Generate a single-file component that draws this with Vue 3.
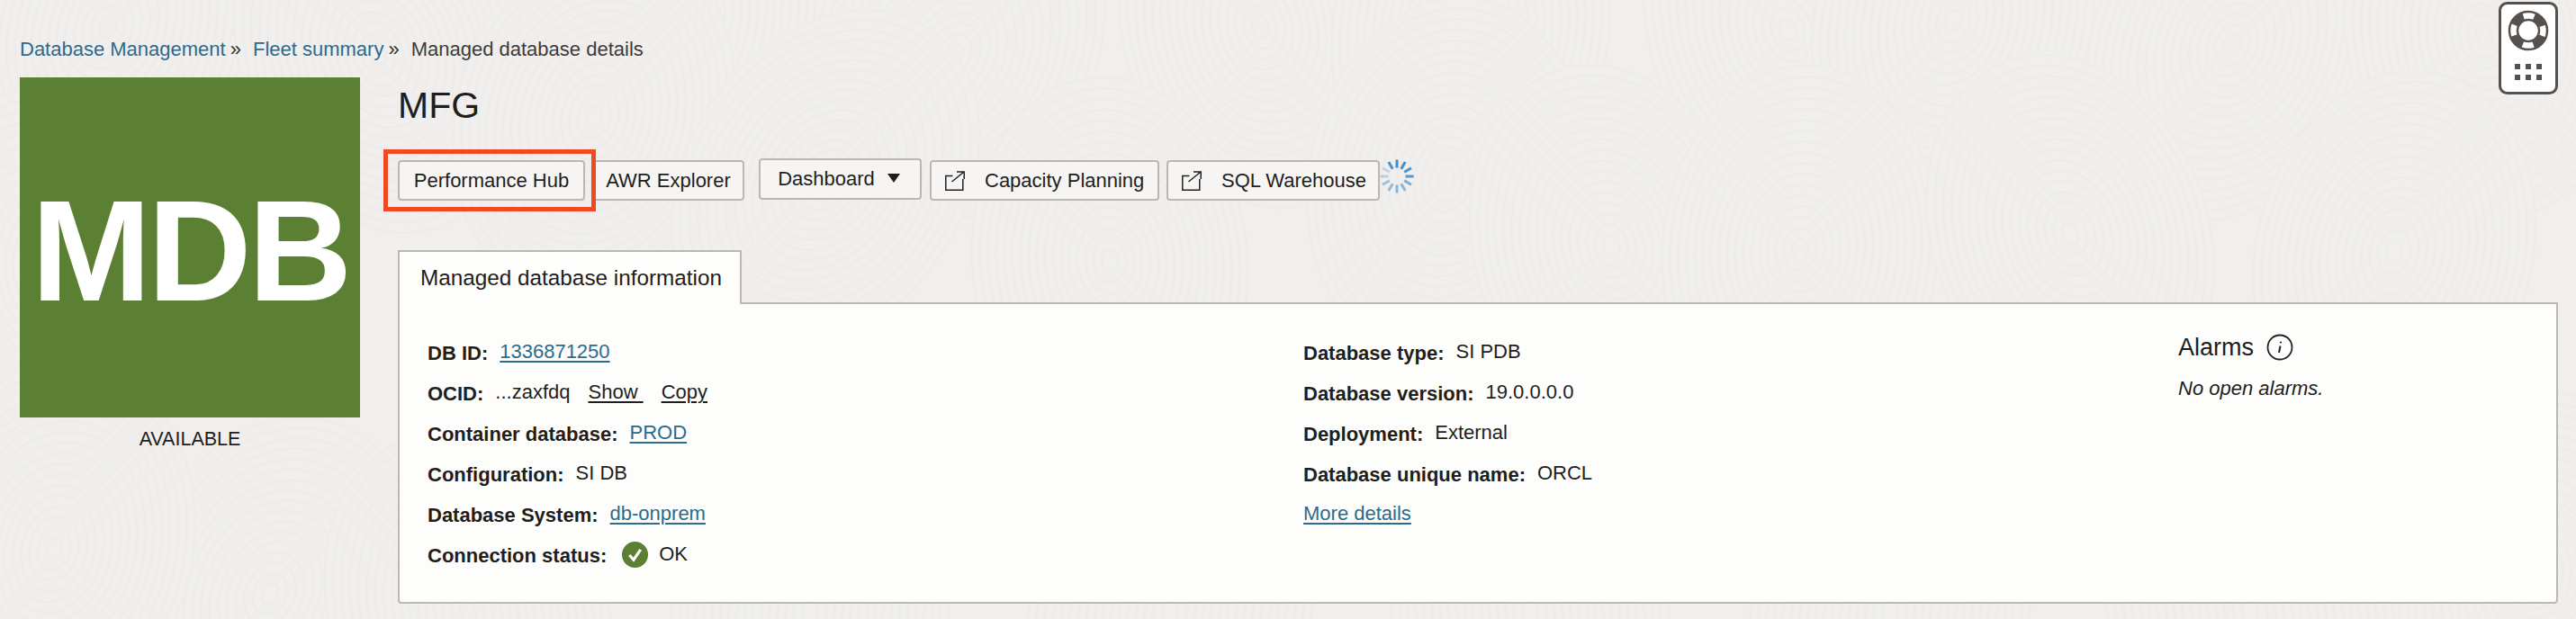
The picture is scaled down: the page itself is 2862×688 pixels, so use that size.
<script setup>
const leftRows = [
  { label: 'DB ID:', value: '1336871250', link: true },
  { label: 'OCID:', value: '...zaxfdq', actions: ['Show\u00a0', 'Copy'] },
  { label: 'Container database:', value: 'PROD', link: true },
  { label: 'Configuration:', value: 'SI DB' },
  { label: 'Database System:', value: 'db-onprem', link: true },
  { label: 'Connection status:', value: 'OK', ok: true },
]
const midRows = [
  { label: 'Database type:', value: 'SI PDB' },
  { label: 'Database version:', value: '19.0.0.0.0' },
  { label: 'Deployment:', value: 'External' },
  { label: 'Database unique name:', value: 'ORCL' },
]
const spokes = [0.95, 0.95, 0.9, 0.85, 0.65, 0.55, 0.55, 0.5, 0.45, 0.3, 0.25, 0.9].map((opacity, i) => ({
  angle: i * 30,
  opacity,
}))
// x, y, rotation of each fingerprint-like swirl in the background; later ones lie over earlier ones
const swirls = [
  [120, 30, 20], [420, 60, -20], [760, 20, 10], [1060, 60, 30], [1400, 30, -15],
  [1634, 33, 10], [1986, 33, -20], [2170, 23, 15], [2480, 50, 25], [2760, 40, -10],
  [60, 300, -10], [300, 660, 25], [660, 130, 15], [917, 200, 35], [1233, 290, -5],
  [1607, 200, 10], [1790, 273, -15], [2000, 277, 5], [2300, 260, -20], [2660, 280, 15],
  [60, 610, 15], [520, 680, -20], [900, 680, 10], [1300, 680, 20], [1700, 680, -10],
  [2100, 680, 15], [2500, 680, -25], [2820, 640, 10],
]
const rings = Array.from({ length: 17 }, (_, i) => 17 - i)
</script>

<template>
  <div class="page">
    <svg class="texture" width="2862" height="688" aria-hidden="true">
      <g v-for="(s, i) in swirls" :key="i" :transform="`translate(${s[0]} ${s[1]}) rotate(${s[2]})`"
        stroke="#edecea" stroke-width="2.5" fill="none">
        <ellipse v-for="n in rings" :key="n" cx="0" cy="0" :rx="n * 9" :ry="n * 12"
          :fill="n === 17 ? '#f0efed' : 'none'" />
      </g>
    </svg>

    <nav class="crumbs">
      <a>Database Management</a><span class="sep">»</span>
      <a>Fleet summary</a><span class="sep">»</span>
      <span class="current">Managed database details</span>
    </nav>

    <div class="main">
      <aside class="side">
        <div class="tile">MDB</div>
        <div class="state">AVAILABLE</div>
      </aside>

      <section class="content">
        <h1>MFG</h1>
        <div class="actions">
          <button class="btn first">Performance Hub</button>
          <button class="btn awr">AWR Explorer</button>
          <button class="btn dash">Dashboard <span class="caret"></span></button>
          <button class="btn ext cap">
            <svg width="22" height="22" viewBox="0 0 22 22" fill="none" stroke="#222" stroke-width="1.5">
              <path d="M8.5 5.5H.8v15.7h19V9" />
              <path d="M7.5 12 21 1M13 .9h8.2V9" />
            </svg>
            Capacity Planning
          </button>
          <button class="btn ext sql">
            <svg width="22" height="22" viewBox="0 0 22 22" fill="none" stroke="#222" stroke-width="1.5">
              <path d="M8.5 5.5H.8v15.7h19V9" />
              <path d="M7.5 12 21 1M13 .9h8.2V9" />
            </svg>
            SQL Warehouse
          </button>
          <svg class="spinner" width="40" height="40" viewBox="-20 -20 40 40">
            <line v-for="s in spokes" :key="s.angle" x1="0" y1="-9.5" x2="0" y2="-18.5"
              stroke="#3a87cb" stroke-width="3" :stroke-opacity="s.opacity"
              :transform="`rotate(${s.angle})`" />
          </svg>
        </div>

        <div class="tabs"><div class="tab">Managed database information</div></div>

        <div class="panel">
          <div class="col col-left">
            <div v-for="r in leftRows" :key="r.label" class="row">
              <b>{{ r.label }}</b>
              <svg v-if="r.ok" class="ok" width="29" height="29" viewBox="0 0 28 28">
                <circle cx="14" cy="14" r="14" fill="#5c8033" />
                <path d="M8 14.5l4.5 5 7.5-11" fill="none" stroke="#fff" stroke-width="3" />
              </svg>
              <a v-if="r.link" class="link">{{ r.value }}</a>
              <span v-else>{{ r.value }}</span>
              <a v-for="x in r.actions" :key="x" class="act">{{ x }}</a>
            </div>
          </div>
          <div class="col col-mid">
            <div v-for="r in midRows" :key="r.label" class="row">
              <b>{{ r.label }}</b><span>{{ r.value }}</span>
            </div>
            <div class="row"><a class="link">More details</a></div>
          </div>
          <div class="col col-alarms">
            <div class="alarm-head">
              <span>Alarms</span>
              <svg width="30" height="30" viewBox="0 0 30 30" fill="none" stroke="#222" stroke-width="1.8">
                <circle cx="15" cy="15" r="13.5" />
                <path d="M15.5 13.5l-1.5 7.5" stroke-width="2" />
                <circle cx="16" cy="9.5" r="1.1" fill="#222" stroke="none" />
              </svg>
            </div>
            <em>No open alarms.</em>
          </div>
        </div>
      </section>
    </div>

    <div class="help">
      <svg width="66" height="103" viewBox="0 0 66 103">
        <rect x="1.5" y="1.5" width="63" height="100" rx="8" fill="#fff" stroke="#55514e" stroke-width="3" />
        <circle cx="33" cy="32" r="21" fill="none" stroke="#55514e" stroke-width="2.5" />
        <circle cx="33" cy="32" r="12" fill="none" stroke="#55514e" stroke-width="2.5" />
        <circle cx="33" cy="32" r="16.5" fill="none" stroke="#55514e" stroke-width="9"
          stroke-dasharray="14 11.92" stroke-dashoffset="-6.05" />
        <g fill="#55514e">
          <rect x="18" y="69" width="6" height="6" /><rect x="30" y="69" width="6" height="6" /><rect x="42" y="69" width="6" height="6" />
          <rect x="18" y="81" width="6" height="6" /><rect x="30" y="81" width="6" height="6" /><rect x="42" y="81" width="6" height="6" />
        </g>
      </svg>
    </div>
  </div>
</template>

<style>
html, body { margin: 0; background: #f0efed; }
</style>

<style scoped>
.page {
  position: relative;
  width: 2862px;
  height: 688px;
  overflow: hidden;
  box-sizing: border-box;
  padding: 42px 20px 0 22px;
  background: #f0efed;
  color: #1f1e1c;
  font: 22px/1.2 "Liberation Sans", Arial, sans-serif;
}
.texture { position: absolute; inset: 0; }
.crumbs, .main { position: relative; }
.crumbs { height: 26px; display: flex; align-items: center; font-size: 22px; color: #3d3b39; }
.crumbs a { color: #2c6a8e; }
.sep { margin: 0 13px 0 5px; color: #333; }
.main { display: flex; margin-top: 18px; }
.side { width: 378px; margin-right: 42px; }
.tile {
  height: 378px;
  box-sizing: border-box;
  padding-top: 7px;
  display: flex;
  align-items: center;
  justify-content: center;
  background: #5c8033;
  color: #fff;
  font-size: 160px;
  font-weight: 700;
  letter-spacing: -4px;
}
.state { margin-top: 12px; text-align: center; font-size: 21.5px; }
.content { flex: 1; min-width: 0; }
h1 { margin: 7px 0 0; font-size: 41px; font-weight: 400; line-height: 48px; }
.actions { display: flex; align-items: flex-start; margin-top: 37px; position: relative; }
.btn {
  height: 45px;
  box-sizing: border-box;
  padding: 0;
  border: 2px solid #bdb7b0;
  border-radius: 4px;
  background: #f6f5f3;
  color: #1f1e1c;
  font: 22px "Liberation Sans", Arial, sans-serif;
}
.first { width: 208px; position: relative; z-index: 1; }
.first::after {
  content: "";
  position: absolute;
  inset: -14px -14px -14px -18px;
  border: 5px solid #f04a24;
  pointer-events: none;
}
.awr { width: 169px; margin-left: 8px; }
.dash { width: 181px; height: 46px; margin: -2px 0 0 16px; padding-right: 3px; }
.caret {
  display: inline-block;
  margin-left: 8px;
  border: 7px solid transparent;
  border-top: 10px solid #1f1e1c;
  border-bottom: 0;
  vertical-align: 3px;
}
.ext { display: flex; align-items: center; gap: 22px; padding-left: 15px; }
.cap { width: 255px; margin-left: 9px; }
.sql { width: 237px; margin-left: 8px; }
.spinner { margin: -2px 0 0 -1px; }
.tabs { display: flex; margin-top: 55px; position: relative; z-index: 1; }
.tab {
  width: 382px;
  height: 60px;
  box-sizing: border-box;
  padding: 14px 0 0 23px;
  border: 2px solid #bdb7b0;
  border-bottom: 0;
  background: #fdfdfb;
  font-size: 24.3px;
}
.panel {
  display: flex;
  width: 2400px;
  height: 335px;
  margin-top: -2px;
  box-sizing: border-box;
  padding: 31px 0 0 31px;
  border: 2px solid #bdb7b0;
  border-radius: 0 0 4px 4px;
  background: #fdfdfb;
}
.col-left { width: 973px; }
.col-mid { width: 972px; }
.col-alarms { padding-top: 1px; }
.row { height: 45px; display: flex; align-items: center; gap: 13px; }
.row b { position: relative; top: 2px; }
.link { color: #2c6a8e; text-decoration: underline; text-underline-offset: 3px; }
.act { text-decoration: underline; text-underline-offset: 3px; margin-left: 7px; }
.ok { margin: 0 -1px 0 4px; }
.alarm-head { display: flex; align-items: center; gap: 14px; font-size: 27px; margin-bottom: 17px; }
.col-alarms em { font-size: 22px; }
.help { position: absolute; left: 2776px; top: 2px; }
</style>
